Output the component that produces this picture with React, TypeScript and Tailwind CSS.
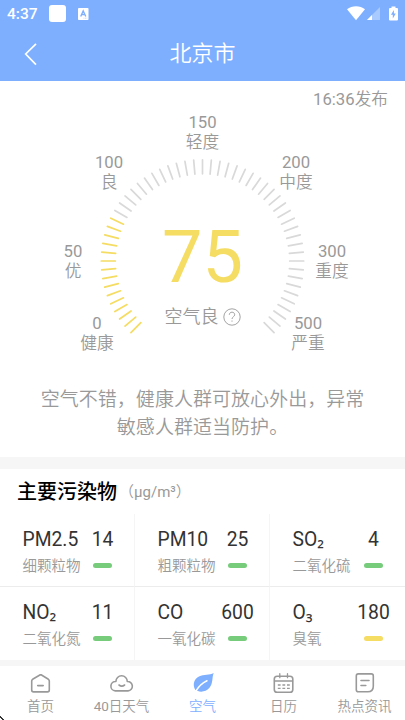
import React from "react";

const ticks = Array.from({ length: 55 }, (_, i) => i);

const labels = [
  { value: "0", name: "健康", x: 97, y: 233 },
  { value: "50", name: "优", x: 73, y: 161 },
  { value: "100", name: "良", x: 109, y: 72 },
  { value: "150", name: "轻度", x: 202.5, y: 32 },
  { value: "200", name: "中度", x: 296, y: 72 },
  { value: "300", name: "重度", x: 332, y: 161 },
  { value: "500", name: "严重", x: 308, y: 233 },
];

type Pollutant = { name: string; sub?: string; label: string; value: string; color: string };

const pollutants: Pollutant[] = [
  { name: "PM2.5", label: "细颗粒物", value: "14", color: "bg-[#77cc7c]" },
  { name: "PM10", label: "粗颗粒物", value: "25", color: "bg-[#77cc7c]" },
  { name: "SO", sub: "₂", label: "二氧化硫", value: "4", color: "bg-[#77cc7c]" },
  { name: "NO", sub: "₂", label: "二氧化氮", value: "11", color: "bg-[#77cc7c]" },
  { name: "CO", label: "一氧化碳", value: "600", color: "bg-[#77cc7c]" },
  { name: "O", sub: "₃", label: "臭氧", value: "180", color: "bg-[#f5dc62]" },
];

function StatusBar() {
  return (
    <div className="flex h-[27px] items-center pl-[7px] pr-[7px] text-white">
      <span className="w-[42px] pt-px text-[15.5px] leading-[27px] font-medium">4:37</span>
      <span className="h-[17px] w-[17px] rounded-[3px] bg-white" />
      <svg className="ml-[12px]" width="11" height="12" viewBox="0 0 11 12">
        <rect width="10.5" height="12" rx="0.8" fill="#fff" />
        <path d="M2.7 8.5 5.2 3l2.6 5.5M3.6 6.6h3.3" stroke="#7eafff" strokeWidth="1.4" fill="none" />
        <path d="M5.5 10.2h3.8" stroke="#b9d3ff" strokeWidth="0.8" strokeDasharray="1 .5" />
      </svg>
      <svg className="ml-auto" width="18" height="15" viewBox="0 0 18 15">
        <path d="M0 3.3C5-.9 13-.9 18 3.3L9 14.3Z" fill="#fff" />
      </svg>
      <svg className="ml-[2px]" width="13" height="13" viewBox="0 0 13 13">
        <path d="M13 0v13H0Z" fill="#a9caff" />
        <path d="M5 8v5H0Z" fill="#fff" />
      </svg>
      <svg className="ml-[9px]" width="9" height="15" viewBox="0 0 9 15">
        <path d="M1 2h1.500V.5h4V2H8q1 0 1 1v10.500q0 1-1 1H1q-1 0-1-1V3q0-1 1-1Z" fill="#fff" />
        <path d="M4.900 4 1.900 8.800h1.900v3.600l3-4.900H4.900Z" fill="#7eafff" />
      </svg>
    </div>
  );
}

function Gauge() {
  return (
    <div className="relative h-[283px]">
      <svg className="block" width="405" height="283" viewBox="0 0 405 283" fill="none">
        {ticks.map((i) => (
          <path
            key={i}
            d="M101.300 180h14"
            stroke={i < 15 ? "#f5dc62" : "#d9d9d9"}
            strokeWidth="1.700"
            strokeLinecap="round"
            transform={`rotate(${i * 5 - 45} 202.5 180)`}
          />
        ))}
      </svg>
      <span className="absolute top-[9px] right-[17px] text-[16.7px] leading-5 text-[#999]">
        16:36<span className="font-[350]">发布</span>
      </span>
      {labels.map((l) => (
        <div
          key={l.value}
          className="absolute w-16 -translate-x-1/2 text-center text-[16.7px] leading-5 text-[#999]"
          style={{ left: l.x, top: l.y }}
        >
          {l.value}
          <br />
          <span className="font-[350]">{l.name}</span>
        </div>
      ))}
      <div className="absolute inset-x-0 top-[141px] text-center text-[72px] leading-[72px] text-[#f5dc62]">75</div>
      <div className="absolute inset-x-0 top-[223px] flex items-center justify-center gap-[4px] text-[18px] leading-[26px] font-[350] text-[#999]">
        空气良
        <svg width="18" height="18" viewBox="0 0 18 18" fill="none" stroke="#999" strokeWidth="0.9">
          <circle cx="9" cy="9" r="8.2" />
          <path d="M6.3 6.8C6.3 3.3 11.7 3.3 11.7 6.8 11.7 8.7 9 8.8 9 11M9 12.5v1.2" />
        </svg>
      </div>
    </div>
  );
}

function Cell({ item, index }: { item: Pollutant; index: number }) {
  return (
    <div
      className={`flex h-[73px] justify-between pt-[13px] pl-[22.500px] whitespace-nowrap ${
        index % 3 < 2 ? "border-r border-[#f5f5f5]" : ""
      } ${index < 3 ? "border-b border-b-[#ececec]" : ""}`}
    >
      <div className="w-[40px]">
        <div className="h-[26px] text-[19.3px] leading-[26px] text-[#333]">
          {item.name}
          {item.sub && <span className="font-['Noto_Sans',sans-serif] leading-none">{item.sub}</span>}
        </div>
        <div className="text-[14.500px] leading-[28px] font-[350] text-[#999]">{item.label}</div>
      </div>
      <div className="flex w-[63px] flex-col items-center">
        <div className="text-[19.3px] leading-[26px] text-[#333]">{item.value}</div>
        <div className={`mt-[10px] h-[5px] w-[19px] rounded-full ${item.color}`} />
      </div>
    </div>
  );
}

const stroke = { fill: "none", stroke: "#999", strokeWidth: 1.6, strokeLinecap: "round", strokeLinejoin: "round" } as const;

function NavItem({ label, active, children }: { label: React.ReactNode; active?: boolean; children: React.ReactNode }) {
  return (
    <div
      className={`flex flex-1 flex-col items-center pt-[5px] text-[13.500px] leading-[22px] font-[350] ${
        active ? "text-[#7eafff]" : "text-[#999]"
      }`}
    >
      <svg width="26" height="24" viewBox="0 0 26 24" {...stroke}>
        {children}
      </svg>
      <span>{label}</span>
    </div>
  );
}

export default function App() {
  return (
    <div className="relative flex h-[720px] w-[405px] flex-col overflow-hidden bg-white font-[Roboto,'Noto_Sans_CJK_SC',sans-serif]">
      <header className="h-[81px] bg-[#7eafff] text-white">
        <StatusBar />
        <div className="flex h-[54px] items-center">
          <svg className="ml-[23px]" width="16" height="24" viewBox="0 0 16 24" fill="none" stroke="#fff" strokeWidth="1.7">
            <path d="M13 1.8 2.7 12 13 22.7" />
          </svg>
          <h1 className="mr-[39px] flex-1 text-center text-[22px] leading-[54px] font-[350]">北京市</h1>
        </div>
      </header>
      <Gauge />
      <p className="h-[93px] pt-[22px] text-center text-[19px] leading-[28px] font-[350] tracking-[0.04px] text-[#999]">
        空气不错，健康人群可放心外出，异常
        <br />
        敏感人群适当防护。
      </p>
      <div className="h-[12px] bg-[#f6f6f6]" />
      <div className="flex h-[45px] items-center pl-[17px]">
        <h2 className="text-[20px] font-medium text-black">主要污染物</h2>
        <span className="ml-[2px] pt-px text-[15px] font-[350] text-[#999]">
          （<span className="font-normal">μg/m³</span>）
        </span>
      </div>
      <div className="grid h-[146px] grid-cols-3">
        {pollutants.map((p, i) => (
          <Cell key={p.label} item={p} index={i} />
        ))}
      </div>
      <div className="h-[6px] bg-[#f6f6f6]" />
      <nav className="flex h-[54px]">
        <NavItem label="首页">
          <path d="M12.300 3.800q.4-.2.800 0l7.300 4.500q.9.600.9 1.600v9.200q0 1.800-1.800 1.800H5.500q-1.800 0-1.800-1.800V9.900q0-1 .9-1.600ZM9.700 14.600h5.500" />
        </NavItem>
        <NavItem
          label={
            <>
              <span className="font-normal">40</span>日天气
            </>
          }
        >
          <path d="M6.300 19.900H19A4.700 4.700 0 0 0 18.300 10.500 5.700 5.700 0 0 0 6.900 10.500 4.700 4.700 0 0 0 6.300 19.900ZM10 14q2.800 2.200 5.600 0" />
        </NavItem>
        <NavItem label="空气" active>
          <path
            d="M23.700 2C19.500 4.300 14 3.200 9 5.600 4.200 7.900 2.200 13.500 5.200 18.800 9 21.500 15.500 21.500 19.500 16.800 23.300 12.300 21.800 6.500 23.700 2Z"
            fill="#7eafff"
            stroke="none"
          />
          <path d="M5.700 20.300C8.500 15.500 12 12 17 9.700" stroke="#fff" strokeWidth="1.500" />
        </NavItem>
        <NavItem label="日历">
          <rect x="3.300" y="5.200" width="18.500" height="16" rx="2.800" />
          <path d="M3.500 10h18" strokeWidth="1.300" />
          <path d="M8.800 2.700v4M16.500 2.700v4" strokeWidth="1.300" />
          <path d="M6.800 14h12M6.800 17.400h12" strokeDasharray="2.800 1.800" strokeLinecap="butt" strokeWidth="1.300" />
        </NavItem>
        <NavItem label="热点资讯">
          <path d="M6.300 2.900h13q2 0 2 2v10.400q0 5.500-5.500 5.500H6.300q-2 0-2-2V4.900q0-2 2-2ZM9 9.500h8M9 14.500h4.800" />
        </NavItem>
      </nav>
      <svg className="absolute bottom-0 left-0" width="4" height="4" viewBox="0 0 4 4">
        <path d="M0 0h1v1h1v1h1v1h1v1H2V3H1V2H0Z" fill="#333" />
      </svg>
    </div>
  );
}
